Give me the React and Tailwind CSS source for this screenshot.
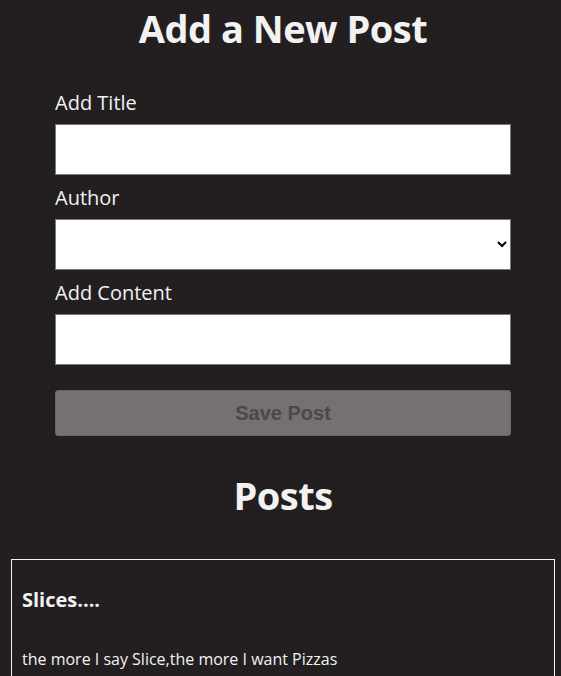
import { useState } from 'react'

const users = [
  { id: '0', name: 'Dude Lebowski' },
  { id: '1', name: 'Neil Young' },
  { id: '2', name: 'Dave Gray' },
]

function AddPostForm() {
  const [title, setTitle] = useState('')
  const [content, setContent] = useState('')
  const [userId, setUserId] = useState('')

  const canSave = Boolean(title) && Boolean(content) && Boolean(userId)

  return (
    <section className="mx-auto w-[456px]">
      <h2 className="pt-[4px] text-center text-[38px] font-bold leading-[48px] tracking-[-0.5px]">
        Add a New Post
      </h2>
      <form className="mt-[38px] flex flex-col">
        <label htmlFor="postTitle" className="text-[20px] leading-[26px]">
          Add Title
        </label>
        <input
          id="postTitle"
          type="text"
          value={title}
          onChange={(e) => setTitle(e.target.value)}
          className="mt-[8px] h-[51px] border border-[#7a7a7a] bg-white px-2 text-black outline-none"
        />
        <label htmlFor="postAuthor" className="mt-[10px] text-[20px] leading-[26px]">
          Author
        </label>
        <select
          id="postAuthor"
          value={userId}
          onChange={(e) => setUserId(e.target.value)}
          className="mt-[8px] h-[51px] border border-[#7a7a7a] bg-white px-2 text-black outline-none"
        >
          <option value=""></option>
          {users.map((user) => (
            <option key={user.id} value={user.id}>
              {user.name}
            </option>
          ))}
        </select>
        <label htmlFor="postContent" className="mt-[10px] text-[20px] leading-[26px]">
          Add Content
        </label>
        <textarea
          id="postContent"
          value={content}
          onChange={(e) => setContent(e.target.value)}
          className="mt-[8px] h-[51px] resize-none border border-[#7a7a7a] bg-white px-2 text-black outline-none"
        />
        <button
          type="button"
          disabled={!canSave}
          className="mt-[25px] h-[46px] rounded-[3px] border border-[#6a6666] bg-[#757170] font-['Liberation_Sans',Arial,sans-serif] text-[20px] font-bold text-[#4b4848]"
        >
          Save Post
        </button>
      </form>
    </section>
  )
}

function PostsList() {
  return (
    <section className="mt-[35px] pl-[11px] pr-[11px]">
      <h2 className="text-center text-[38px] font-bold leading-[48px] tracking-[-0.5px]">Posts</h2>
      <article className="mt-[40px] border border-[#f2f2f2] px-[10px] pt-[27px] pb-[16px]">
        <h3 className="text-[20px] font-bold leading-[26px]">Slices....</h3>
        <p className="mt-[36px] text-[16px] leading-[20px]">the more I say Slice,the more I want Pizzas</p>
      </article>
    </section>
  )
}

export default function App() {
  return (
    <div className="min-h-screen overflow-hidden bg-[#231f20]">
      <main className="w-[566px] font-['Open_Sans','Noto_Sans',sans-serif] text-[#f2f2f2]">
        <AddPostForm />
        <PostsList />
      </main>
    </div>
  )
}
